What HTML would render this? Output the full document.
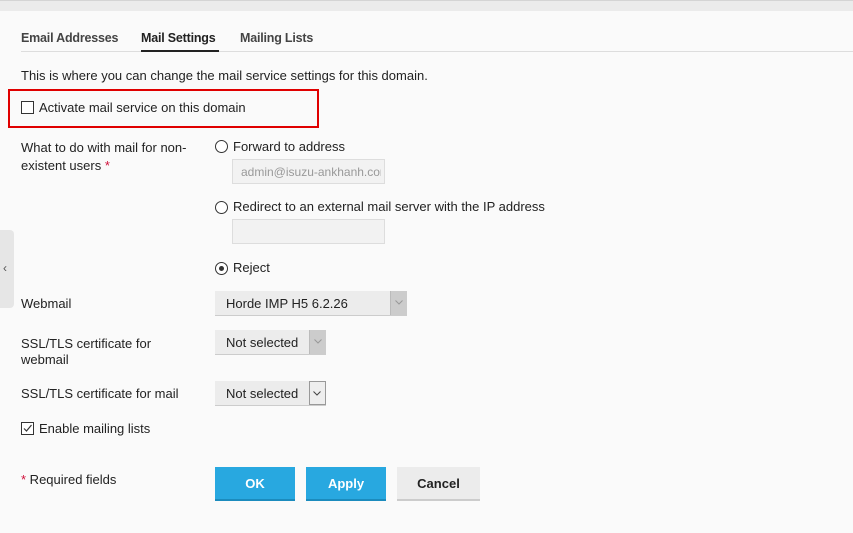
<!DOCTYPE html>
<html><head><style>
body{margin:0;width:853px;height:533px;background:#fafafa;font-family:"Liberation Sans",sans-serif;font-size:13px;color:#222;position:relative;overflow:hidden}
.a{position:absolute;white-space:nowrap}
.cb{position:absolute;width:11px;height:11px;border:1px solid #333;background:#fff}
.rd{position:absolute;width:11px;height:11px;border:1px solid #333;border-radius:50%;background:#fff}
.inp{position:absolute;background:#f2f2f2;border:1px solid #ddd;box-sizing:border-box}
.sel{position:absolute;background:#ececec;border-bottom:1px solid #ccc;box-sizing:border-box;height:25px}
.sel span{position:absolute;left:11px;top:5px}
.arr{position:absolute;right:0;top:0;width:16px;height:24px;background:#ccc;border-left:1px solid #bbb}
.arr svg{position:absolute;left:4px;top:9px}
.btn{position:absolute;top:467px;height:34px;width:80px;text-align:center;line-height:34px;font-weight:bold;font-size:13px;box-sizing:border-box}
.tab{font-weight:bold;font-size:12.5px;letter-spacing:-0.2px}
</style></head><body>
<div class="a" style="left:0;top:0;width:853px;height:10px;background:#ebebeb;border-top:1px solid #d4d4d4"></div>
<div class="a" style="left:0;top:230px;width:14px;height:78px;background:#e6e6e6;border-radius:0 4px 4px 0"></div>
<div class="a" style="left:3px;top:261px;font-size:12px;color:#555">‹</div>
<div class="a" style="left:21px;top:51px;width:832px;height:1px;background:#ddd"></div>
<div class="a tab" style="left:21px;top:31px;color:#444">Email Addresses</div>
<div class="a tab" style="left:141px;top:31px;color:#222">Mail Settings</div>
<div class="a" style="left:141px;top:50px;width:78px;height:2px;background:#222"></div>
<div class="a tab" style="left:240px;top:31px;color:#444">Mailing Lists</div>
<div class="a" style="left:21px;top:68px">This is where you can change the mail service settings for this domain.</div>
<div class="a" style="left:8px;top:89px;width:307px;height:35px;border:2px solid #e00000"></div>
<div class="cb" style="left:21px;top:101px"></div>
<div class="a" style="left:39px;top:100px">Activate mail service on this domain</div>
<div class="a" style="left:21px;top:139px;line-height:18px">What to do with mail for non-<br>existent users <span style="color:#d0103a">*</span></div>
<div class="rd" style="left:215px;top:140px"></div>
<div class="a" style="left:233px;top:139px">Forward to address</div>
<div class="inp" style="left:232px;top:159px;width:153px;height:25px"><span class="a" style="left:8px;top:5px;font-size:12px;color:#999;width:140px;overflow:hidden">admin@isuzu-ankhanh.com</span></div>
<div class="rd" style="left:215px;top:201px"></div>
<div class="a" style="left:233px;top:199px">Redirect to an external mail server with the IP address</div>
<div class="inp" style="left:232px;top:219px;width:153px;height:25px"></div>
<div class="rd" style="left:215px;top:262px"><div style="position:absolute;left:3px;top:3px;width:5px;height:5px;border-radius:50%;background:#333"></div></div>
<div class="a" style="left:233px;top:260px">Reject</div>
<div class="a" style="left:21px;top:296px">Webmail</div>
<div class="sel" style="left:215px;top:291px;width:192px"><span>Horde IMP H5 6.2.26</span><div class="arr"><svg width="8" height="5"><path d="M0.5 0.5L4 4L7.5 0.5" fill="none" stroke="#999"/></svg></div></div>
<div class="a" style="left:21px;top:336px;line-height:16px">SSL/TLS certificate for<br>webmail</div>
<div class="sel" style="left:215px;top:330px;width:111px"><span>Not selected</span><div class="arr"><svg width="8" height="5"><path d="M0.5 0.5L4 4L7.5 0.5" fill="none" stroke="#999"/></svg></div></div>
<div class="a" style="left:21px;top:386px">SSL/TLS certificate for mail</div>
<div class="sel" style="left:215px;top:381px;width:111px"><span>Not selected</span><div class="arr" style="background:#eee;border:1px solid #999;box-sizing:border-box;width:17px"><svg width="8" height="5" style="left:3px;top:9px"><path d="M0.5 0.5L4 4L7.5 0.5" fill="none" stroke="#444"/></svg></div></div>
<div class="cb" style="left:21px;top:422px"><svg width="11" height="11" style="position:absolute;left:0;top:0"><path d="M2 5.5L4.5 8L9.5 2" fill="none" stroke="#333" stroke-width="1.2"/></svg></div>
<div class="a" style="left:39px;top:421px">Enable mailing lists</div>
<div class="a" style="left:21px;top:472px"><span style="color:#d0103a">*</span> Required fields</div>
<div class="btn" style="left:215px;background:#28a8e0;color:#fff;border-bottom:2px solid #1b8bbd">OK</div>
<div class="btn" style="left:306px;background:#28a8e0;color:#fff;border-bottom:2px solid #1b8bbd">Apply</div>
<div class="btn" style="left:397px;width:83px;background:#ececec;color:#222;border-bottom:2px solid #ccc">Cancel</div>
</body></html>
